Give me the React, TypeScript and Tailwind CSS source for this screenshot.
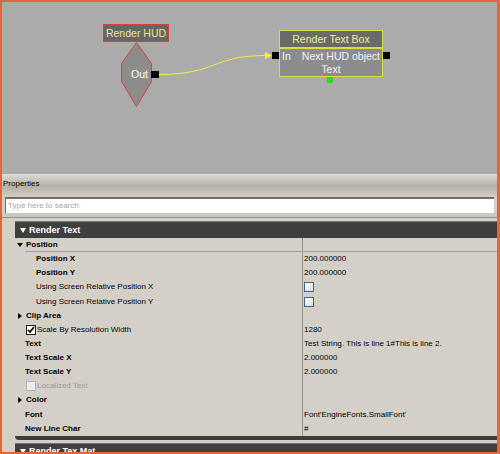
import React from "react";

type Kind = "group" | "closed" | "sub" | "prop" | "check" | "disabled";

type Row = {
  label: string;
  kind: Kind;
  bold?: boolean;
  value?: string;
  box?: boolean;
  line?: boolean;
};

const rows: Row[] = [
  { label: "Position", kind: "group", bold: true, line: true },
  { label: "Position X", kind: "sub", bold: true, value: "200.000000" },
  { label: "Position Y", kind: "sub", bold: true, value: "200.000000" },
  { label: "Using Screen Relative Position X", kind: "sub", box: true },
  { label: "Using Screen Relative Position Y", kind: "sub", box: true },
  { label: "Clip Area", kind: "closed", bold: true },
  { label: "Scale By Resolution Width", kind: "check", value: "1280" },
  {
    label: "Text",
    kind: "prop",
    bold: true,
    value: "Test String. This is line 1#This is line 2.",
  },
  { label: "Text Scale X", kind: "prop", bold: true, value: "2.000000" },
  { label: "Text Scale Y", kind: "prop", bold: true, value: "2.000000" },
  { label: "Localized Text", kind: "disabled" },
  { label: "Color", kind: "closed", bold: true },
  {
    label: "Font",
    kind: "prop",
    bold: true,
    value: "Font'EngineFonts.SmallFont'",
  },
  { label: "New Line Char", kind: "prop", bold: true, value: "#" },
];

function Graph() {
  return (
    <div className="relative h-[172px] shrink-0 overflow-hidden bg-[#ababab] text-[10.5px] leading-none">
      <svg className="absolute left-0 top-0" width="496" height="172">
        <polygon
          points="134.5,40.5 149.5,61.5 149.5,79.5 134.5,104.5 119.5,79.5 119.5,61.5"
          fill="#8c8c8c"
          stroke="#e0403c"
          strokeWidth="1"
        />
        <path
          d="M157 72.5 C 215 72.5, 210 53.5, 264 53.5"
          fill="none"
          stroke="#f2f23a"
          strokeWidth="1"
        />
        <polygon points="263,50 270,53.5 263,57" fill="#f2f23a" />
      </svg>

      {/* Render HUD node */}
      <div className="absolute left-[101px] top-[22px] flex h-[18px] w-[66px] items-center justify-center border border-[#d8403c] bg-[#666666] text-[#e6e69a]">
        Render HUD
      </div>
      <div className="absolute left-[129px] top-[66px] flex h-[12px] items-center text-white">
        Out
      </div>
      <div className="absolute left-[149px] top-[69px] h-[7px] w-[8px] bg-black" />

      {/* Render Text Box node */}
      <div className="absolute left-[277px] top-[28px] flex h-[18px] w-[104px] items-center justify-center border border-[#dcdc3c] bg-[#6a6a6a] text-[#ececa0]">
        Render Text Box
      </div>
      <div className="absolute left-[277px] top-[46px] flex h-[29px] w-[104px] flex-col border border-[#dcdc3c] bg-[#8c8c8c] pt-[1px] leading-[13px] text-[#f4f4f4]">
        <div className="flex justify-between px-[2px]">
          <span>In</span>
          <span>Next HUD object</span>
        </div>
        <div className="text-center">Text</div>
      </div>
      <div className="absolute left-[270px] top-[50px] h-[7px] w-[7px] bg-black" />
      <div className="absolute left-[381px] top-[50px] h-[7px] w-[7px] bg-black" />
      <div className="absolute left-[325px] top-[75px] h-[6px] w-[6px] bg-[#22dd22]" />
    </div>
  );
}

function CheckBox({ checked, disabled }: { checked?: boolean; disabled?: boolean }) {
  return (
    <span
      className={
        disabled
          ? "flex h-[10px] w-[10px] shrink-0 border border-[#a4b4c8] bg-[#ecebe8]"
          : "flex h-[10px] w-[10px] shrink-0 items-center justify-center border border-[#1e1e1e] bg-white"
      }
    >
      {checked && (
        <svg width="8" height="8" viewBox="0 0 8 8">
          <path d="M1 4 L3 6 L7 1" fill="none" stroke="#000" strokeWidth="1.6" />
        </svg>
      )}
    </span>
  );
}

function ValueBox() {
  return (
    <span className="block h-[10px] w-[10px] border border-[#42609a] bg-linear-to-br from-white to-[#dcdcd8]" />
  );
}

function PropRow({ row }: { row: Row }) {
  const open = row.kind === "group";
  const closed = row.kind === "closed";
  return (
    <div className="flex h-[14.14px] items-stretch">
      <div className="flex w-[10px] shrink-0 items-center pl-[2px]">
        {open && (
          <span className="h-0 w-0 border-x-[3px] border-t-[4px] border-x-transparent border-t-black" />
        )}
        {closed && (
          <span className="ml-[1px] h-0 w-0 border-y-[3px] border-l-[4px] border-y-transparent border-l-black" />
        )}
      </div>
      <div
        className={
          row.line
            ? "flex flex-1 items-stretch border-b border-[#a29e96]"
            : "flex flex-1 items-stretch"
        }
      >
        <div
          className={
            "flex w-[278px] shrink-0 items-center gap-[1px] border-r border-[#9a968e] " +
            (row.kind === "sub" ? "pl-[11px] " : row.kind === "prop" ? "pl-0 " : "pl-[1px] ") +
            (row.bold ? "font-bold " : "") +
            (row.kind === "disabled" ? "text-[#9a9894]" : "text-black")
          }
        >
          {row.kind === "check" && <CheckBox checked />}
          {row.kind === "disabled" && <CheckBox disabled />}
          <span>{row.label}</span>
        </div>
        <div className="flex flex-1 items-center pl-[1px] text-black">
          {row.box ? <ValueBox /> : row.value}
        </div>
      </div>
    </div>
  );
}

function Category({ title }: { title: string }) {
  return (
    <div className="ml-[13px] flex h-[17px] shrink-0 items-center border-t border-[#767676] bg-[#3f3f3f] text-[9px] font-bold leading-none text-white">
      <span className="ml-[5px] h-0 w-0 border-x-[3px] border-t-[5px] border-x-transparent border-t-white" />
      <span className="ml-[3px]">{title}</span>
    </div>
  );
}

export default function App() {
  return (
    <div className="flex h-[454px] w-[500px] flex-col overflow-hidden border-2 border-r-[3px] border-[#e8653c] font-['Liberation_Sans',Arial,sans-serif]">
      <Graph />
      <div className="flex flex-1 flex-col overflow-hidden bg-[#d4d0c8] text-[8px] leading-none">
        <div className="h-px shrink-0 bg-[#e4e0d8]" />
        <div className="flex h-[22px] shrink-0 items-start bg-linear-to-b from-[#dcd8d0] via-[#b4b0a8] to-[#d2cec6] pl-[1px] pt-[5px] text-black">
          Properties
        </div>
        <div className="shrink-0 px-[3px]">
          <div className="flex h-[16px] items-center border-t-2 border-l border-[#6c6c6c] bg-white pl-[2px] text-[#a6a6a6]">
            Type here to search
          </div>
        </div>
        <div className="h-[4px] shrink-0 bg-[#c9c8c4]" />
        <div className="h-px shrink-0 bg-[#8e8e8e]" />
        <div className="h-[3px] shrink-0" />
        <Category title="Render Text" />
        <div className="flex shrink-0 flex-col pl-[13px]">
          {rows.map((row) => (
            <PropRow key={row.label} row={row} />
          ))}
        </div>
        <div className="ml-[13px] h-[4px] shrink-0 rounded-bl-[4px] bg-[#3c3c3c]" />
        <div className="h-[3px] shrink-0" />
        <Category title="Render Tex Mat" />
      </div>
    </div>
  );
}
